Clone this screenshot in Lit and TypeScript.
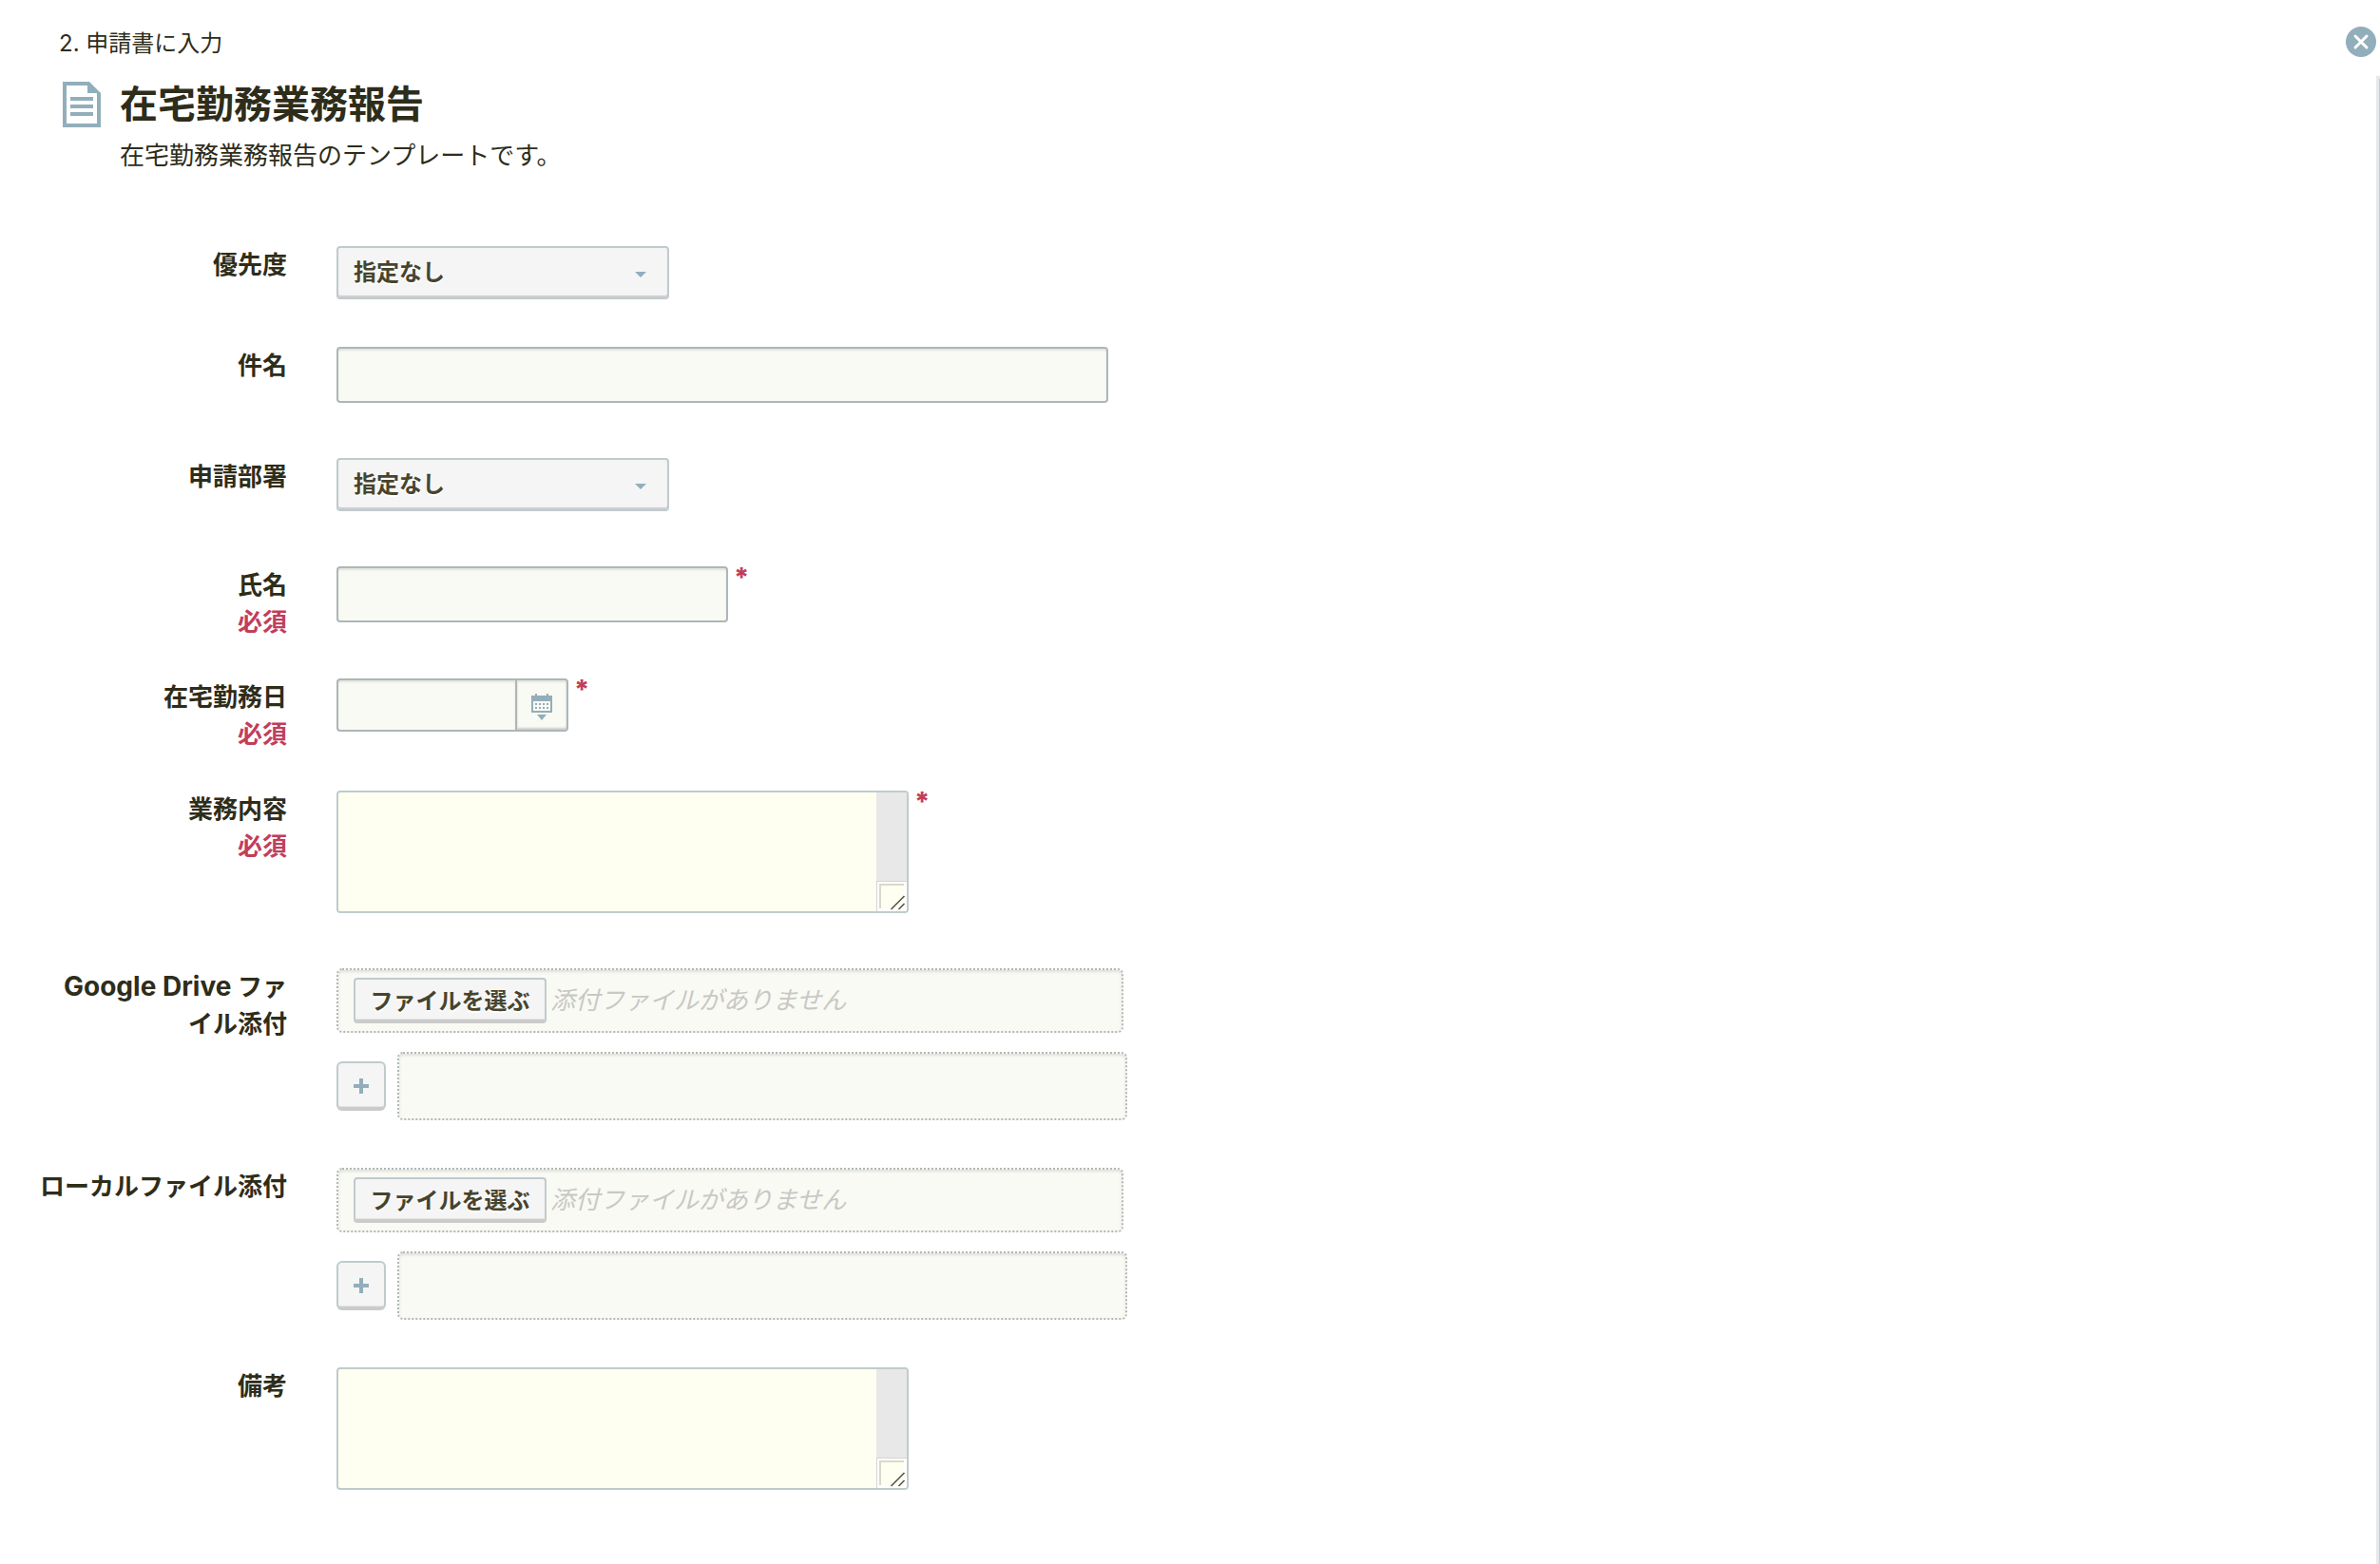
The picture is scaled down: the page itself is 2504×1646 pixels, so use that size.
import { LitElement, html, css, svg, nothing, type TemplateResult } from "lit";
import { customElement, property } from "lit/decorators.js";

const base = css`
  * {
    box-sizing: border-box;
  }
  button,
  input,
  select,
  textarea {
    margin: 0;
    font-family: inherit;
    color: inherit;
    outline: none;
  }
  button,
  select {
    cursor: pointer;
  }
`;

/* One labelled line of the form: label at the left, controls in the slot. */
@customElement("form-row")
export class FormRow extends LitElement {
  @property({ type: Boolean }) required = false;

  static styles = [
    base,
    css`
      :host {
        display: grid;
        grid-template-columns: 260px minmax(0, 1fr);
        column-gap: 52px;
        padding-bottom: 40px;
      }
      .label {
        text-align: right;
        font-size: 26px;
        line-height: 39px;
        font-weight: 700;
        color: #2e2d1a;
      }
      .must {
        display: block;
        color: #c23e5a;
      }
    `,
  ];

  render() {
    return html`
      <div class="label">
        <slot name="label"></slot>
        ${this.required ? html`<span class="must">必須</span>` : nothing}
      </div>
      <slot></slot>
    `;
  }
}

const docIcon = svg`
  <path fill="#92aebb" fill-rule="evenodd"
    d="M0 0H28L40 12V48H0ZM4 4V44H36V12H26V4Z" />
  <path fill="#92aebb" d="M8 16H32V20H8ZM8 24H32V28H8ZM8 32H32V36H8Z" />
`;

const calendarIcon = svg`
  <path fill="#92aebb" fill-rule="evenodd"
    d="M4 0H6V2H16V0H18V2H22V20H0V2H4ZM2 8V18H20V8Z" />
  <path fill="#92aebb"
    d="M4 10h2v2h-2zM8 10h2v2h-2zM12 10h2v2h-2zM16 10h2v2h-2zM4 14h2v2h-2zM8 14h2v2h-2zM12 14h2v2h-2zM16 14h2v2h-2z" />
  <path fill="#92aebb" d="M6 22H16L11 28Z" />
`;

@customElement("app-root")
export class AppRoot extends LitElement {
  static styles = [
    base,
    css`
      :host {
        display: block;
        min-height: 100vh;
        background: #fff;
        color: #2e2d1a;
        font-family: Inter, "Noto Sans CJK JP", sans-serif;
        font-size: 26px;
        line-height: 39px;
      }
      svg {
        display: block;
      }
      .page {
        display: flex;
        flex-direction: column;
        min-height: 100vh;
      }
      .top {
        display: flex;
        justify-content: space-between;
        align-items: flex-start;
        height: 80px;
        padding: 28px 4px 0 62px;
      }
      .step {
        margin: 0;
        font-size: 24px;
        line-height: 36px;
      }
      label .latin {
        font-size: 28px;
      }
      .close {
        width: 32px;
        height: 32px;
        padding: 0;
        border: 0;
        border-radius: 50%;
        background: #92aebb;
      }
      .body {
        flex: 1;
        display: flex;
      }
      .content {
        flex: 1;
        min-width: 0;
        padding-left: 42px;
      }
      .edge {
        width: 4px;
        border: solid #e8e8e8;
        border-width: 3px 0 0 3px;
        background: #c1cdd6;
      }
      .heading {
        display: flex;
        gap: 20px;
        padding: 0 0 76px 24px;
      }
      .doc {
        margin-top: 6px;
      }
      h1 {
        margin: 0;
        font-size: 40px;
        line-height: 60px;
        font-weight: 700;
      }
      .heading p {
        margin: 4px 0 0;
      }
      .control {
        display: flex;
        align-items: flex-start;
        padding-bottom: 10px;
      }
      .control.custom {
        padding-bottom: 18px;
      }
      .select {
        display: grid;
        align-items: center;
        width: 350px;
      }
      .select > * {
        grid-area: 1 / 1;
      }
      .select select {
        appearance: none;
        width: 100%;
        height: 56px;
        padding: 0 48px 2px 16px;
        border: 2px solid #c0cbcd;
        border-radius: 4px;
        background: #f5f5f6;
        box-shadow: inset 0 -2px 1px #cdcdcd;
        color: #47442e;
        font-size: 24px;
        font-weight: 700;
        text-shadow: 0 2px 0 #fff;
      }
      .select svg {
        justify-self: end;
        margin: 4px 24px 0 0;
        pointer-events: none;
      }
      .text {
        width: 412px;
        height: 59px;
        padding: 0 12px;
        border: 2px solid #aeb6b9;
        border-radius: 4px;
        background: #f9faf4;
        box-shadow: inset 0 2px 2px #e2e3dc;
        font-size: 26px;
      }
      .text.wide {
        width: 812px;
      }
      .star {
        margin-left: 6px;
        color: #c23e5a;
        font-size: 28px;
        line-height: 24px;
        font-weight: 800;
      }
      .date {
        display: flex;
      }
      .date .text {
        width: 188px;
        height: 56px;
        border-right: 0;
        border-radius: 4px 0 0 4px;
      }
      .date button {
        display: flex;
        justify-content: center;
        align-items: center;
        width: 56px;
        height: 56px;
        padding: 4px 0 0;
        border: 2px solid #aeb6b9;
        border-radius: 0 4px 4px 0;
        background: #f9faf4;
        box-shadow: inset 0 2px 2px #e2e3dc, inset 0 -2px 2px #cfcfcb;
      }
      .area {
        display: flex;
        width: 602px;
        height: 129px;
        border: 2px solid #c0cbcd;
        border-radius: 4px;
        background: #fefff0;
        overflow: hidden;
      }
      .area textarea {
        flex: 1;
        min-width: 0;
        padding: 8px 12px;
        border: 0;
        resize: none;
        background: transparent;
        font-size: 26px;
        line-height: 39px;
      }
      .rail {
        display: flex;
        flex-direction: column;
        justify-content: flex-end;
        width: 32px;
        background: #e8e8e8;
      }
      .files {
        display: grid;
        row-gap: 20px;
        padding-bottom: 10px;
      }
      .drop {
        display: flex;
        align-items: center;
        gap: 4px;
        width: 828px;
        height: 68px;
        padding: 0 16px;
        border: 2px dotted #b1b8b8;
        border-radius: 6px;
        background: #f9faf4;
        box-shadow: inset 0 2px 3px #dfe0da;
      }
      .drop em {
        padding-bottom: 2px;
        color: #c8c8c5;
      }
      .more {
        display: flex;
        align-items: center;
        gap: 12px;
      }
      .more .drop {
        width: 768px;
        height: 72px;
      }
      .push {
        display: flex;
        justify-content: center;
        align-items: center;
        border: 2px solid #c0cbcd;
        border-bottom: 4px solid #cbcbcb;
        border-radius: 6px;
        background: #f5f5f6;
        box-shadow: inset 0 -1px 1px #e4e4e4;
      }
      .pick {
        width: 203px;
        height: 48px;
        padding: 0 0 2px;
        border-radius: 4px;
        color: #47442e;
        font-size: 24px;
        font-weight: 700;
        text-shadow: 0 2px 0 #fff;
        white-space: nowrap;
      }
      .plus {
        width: 52px;
        height: 52px;
        padding: 2px 0 0;
      }
    `,
  ];

  private selectBox(id: string) {
    return html`<div class="select">
      <select id=${id}>
        <option>指定なし</option>
      </select>
      <svg width="12" height="6" viewBox="0 0 12 6" aria-hidden="true">
        <path fill="#92aebb" d="M0 0H12L6 6Z" />
      </svg>
    </div>`;
  }

  private area(id: string) {
    return html`<div class="area">
      <textarea id=${id}></textarea>
      <div class="rail" aria-hidden="true">
        <svg width="32" height="32" viewBox="0 0 32 32">
          <path fill="#d4d4d4" d="M0 0H32V32H0Z" />
          <path fill="#fff" d="M1 1H32V32H1Z" />
          <path fill="#fefff0" d="M3 3H29V29H3Z" />
          <path fill="#d9d9cb" d="M3 3H29V5H5V29H3Z" />
          <path stroke="#55564e" stroke-width="1.6" d="M15.500 30 29.500 16M23.500 30 29.500 24" />
        </svg>
      </div>
    </div>`;
  }

  private files(id: string) {
    return html`<div class="files">
      <div class="drop">
        <button class="push pick" id=${id} type="button">ファイルを選ぶ</button>
        <em>添付ファイルがありません</em>
      </div>
      <div class="more">
        <button class="push plus" type="button" aria-label="追加">
          <svg width="16" height="16" viewBox="0 0 16 16">
            <path fill="#92aebb" d="M6 0H10V6H16V10H10V16H6V10H0V6H6Z" />
          </svg>
        </button>
        <div class="drop"></div>
      </div>
    </div>`;
  }

  private row(id: string, label: string | TemplateResult, control: TemplateResult, required = false) {
    return html`<form-row ?required=${required}>
      <label slot="label" for=${id}>${label}</label>
      ${control}
    </form-row>`;
  }

  render() {
    const star = html`<span class="star" aria-hidden="true">*</span>`;
    return html`
      <div class="page">
        <header class="top">
          <p class="step">2. 申請書に入力</p>
          <button class="close" type="button" aria-label="閉じる">
            <svg width="32" height="32" viewBox="0 0 32 32">
              <path
                stroke="#fff"
                stroke-width="3"
                stroke-linecap="round"
                d="M10 10 22 22M22 10 10 22"
              />
            </svg>
          </button>
        </header>
        <div class="body">
          <main class="content">
            <div class="heading">
              <svg class="doc" width="40" height="48" viewBox="0 0 40 48" aria-hidden="true">
                ${docIcon}
              </svg>
              <div>
                <h1>在宅勤務業務報告</h1>
                <p>在宅勤務業務報告のテンプレートです。</p>
              </div>
            </div>
            <form>
              ${this.row("priority", "優先度", html`<div class="control">${this.selectBox("priority")}</div>`)}
              ${this.row(
                "subject",
                "件名",
                html`<div class="control custom"><input class="text wide" id="subject" type="text" /></div>`
              )}
              ${this.row("dept", "申請部署", html`<div class="control custom">${this.selectBox("dept")}</div>`)}
              ${this.row(
                "name",
                "氏名",
                html`<div class="control custom"><input class="text" id="name" type="text" />${star}</div>`,
                true
              )}
              ${this.row(
                "date",
                "在宅勤務日",
                html`<div class="control custom">
                  <div class="date">
                    <input class="text" id="date" type="text" />
                    <button type="button" aria-label="日付を選ぶ">
                      <svg width="22" height="28" viewBox="0 0 22 28">${calendarIcon}</svg>
                    </button>
                  </div>
                  ${star}
                </div>`,
                true
              )}
              ${this.row("work", "業務内容", html`<div class="control custom">${this.area("work")}${star}</div>`, true)}
              ${this.row(
                "drive",
                html`<span class="latin">Google Drive </span><span>ファ</span><wbr /><span>イル添付</span>`,
                this.files("drive")
              )}
              ${this.row("local", "ローカルファイル添付", this.files("local"))}
              ${this.row("note", "備考", html`<div class="control custom">${this.area("note")}</div>`)}
            </form>
          </main>
          <div class="edge"></div>
        </div>
      </div>
    `;
  }
}
